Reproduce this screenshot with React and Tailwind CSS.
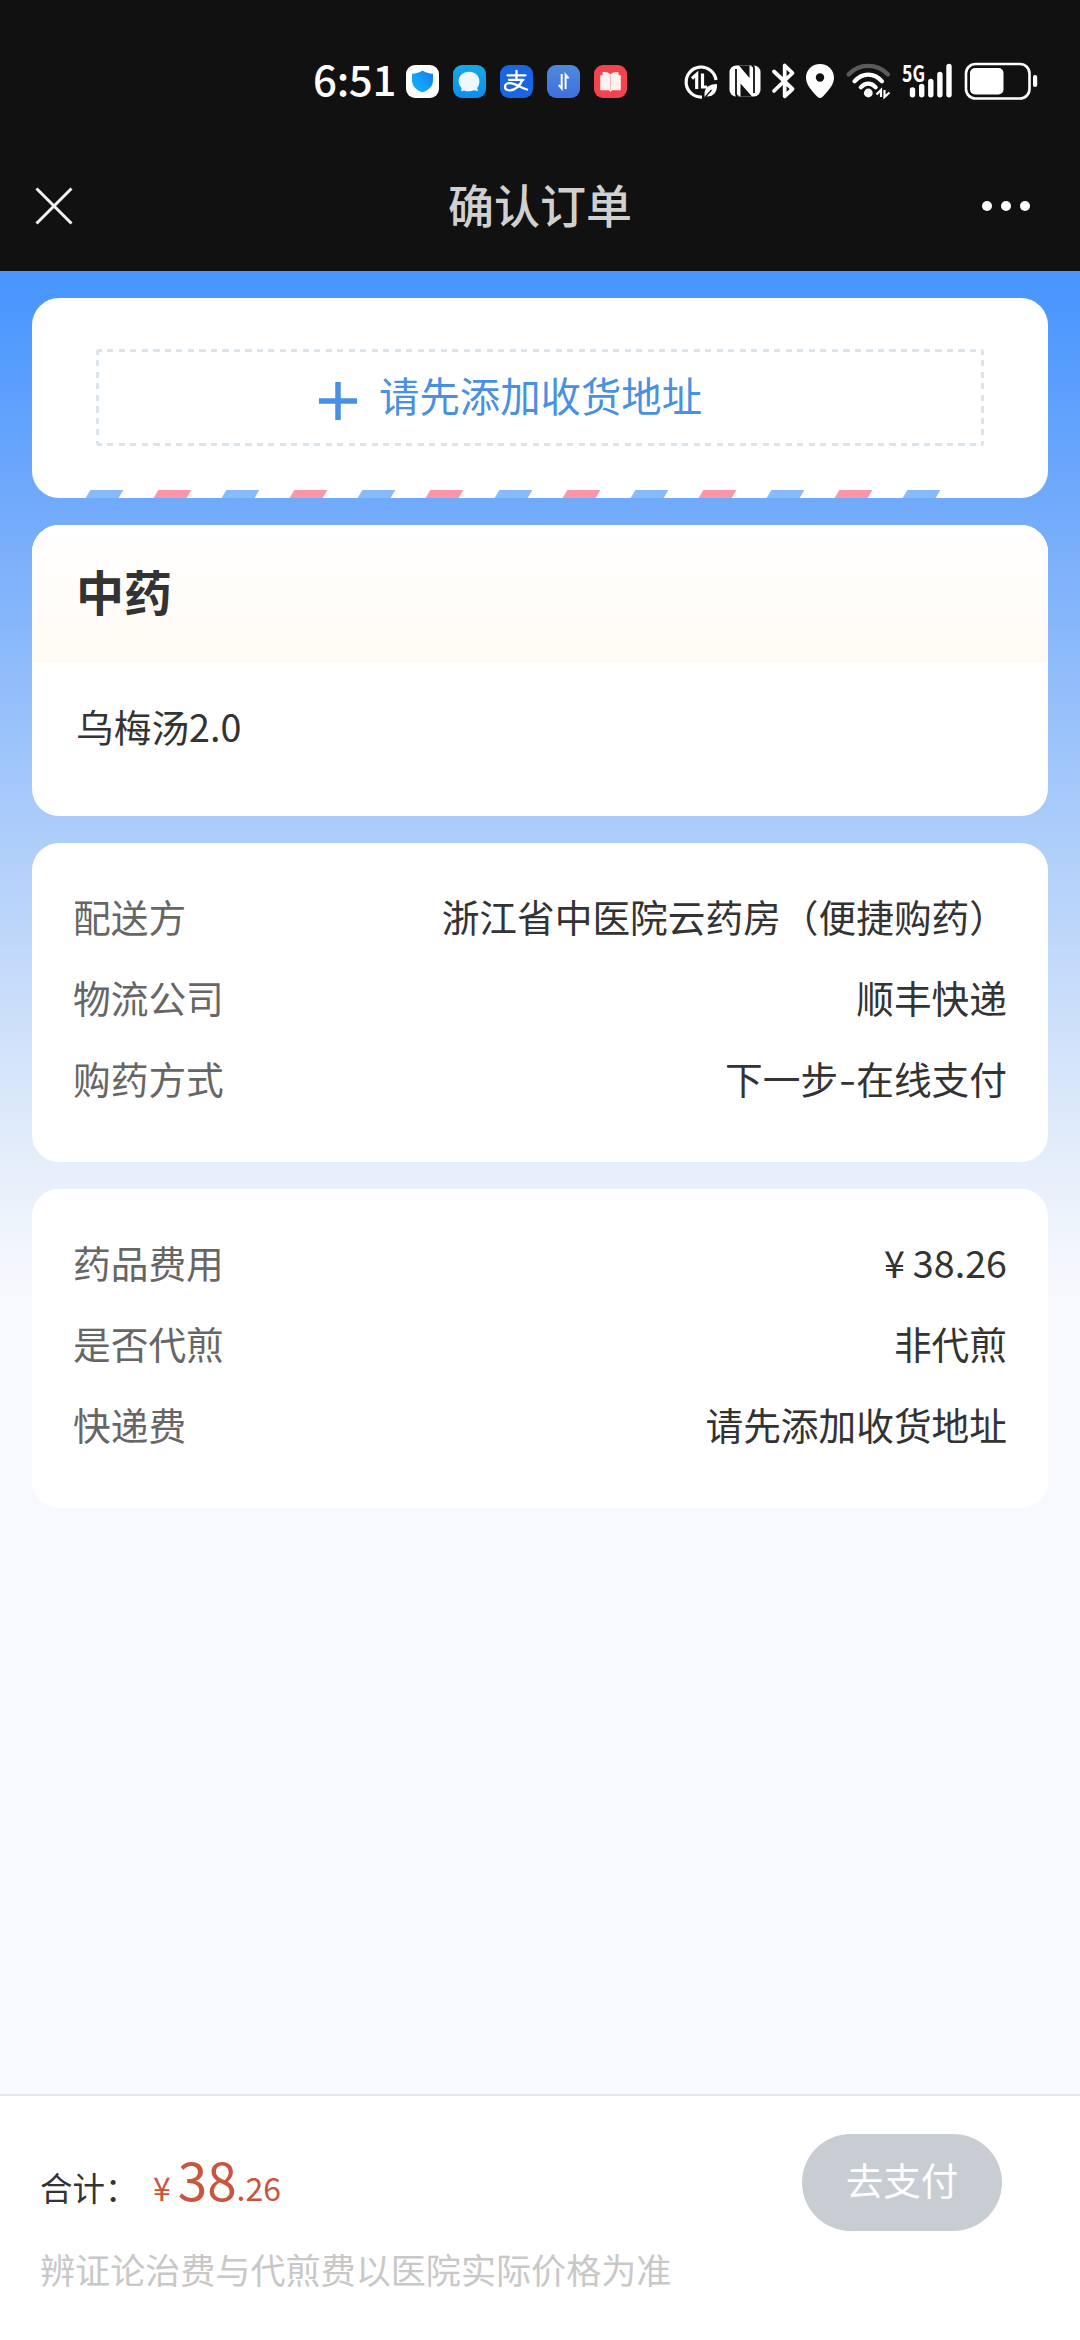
import React from 'react';

const deliveryRows = [
  { label: '配送方', value: '浙江省中医院云药房（便捷购药）' },
  { label: '物流公司', value: '顺丰快递' },
  { label: '购药方式', value: ['下一步', '在线支付'] },
];

const feeRows = [
  { label: '药品费用', price: '38.26' },
  { label: '是否代煎', value: '非代煎' },
  { label: '快递费', value: '请先添加收货地址' },
];

const AppBadge = ({ className, children }) => (
  <div className={`w-[33px] h-[33px] rounded-[9px] overflow-hidden ${className}`}>
    <svg viewBox="0 0 33 33" className="w-full h-full">
      {children}
    </svg>
  </div>
);

const NotificationIcons = () => (
  <div className="flex gap-[14px]">
    <AppBadge className="bg-white">
      <defs>
        <linearGradient id="shield" x1="1" y1="0" x2="0" y2="1">
          <stop offset="0" stopColor="#1577f0" />
          <stop offset="0.5" stopColor="#159df5" />
          <stop offset="1" stopColor="#12b4fa" />
        </linearGradient>
      </defs>
      <path d="M16.500 5.500c3 2.200 6.500 3 10.500 3.300v6.700c0 5.500-4.500 10-10.500 11.800-6-1.800-10.500-6.300-10.500-11.800V8.800c4-.3 7.500-1.100 10.500-3.300z" fill="url(#shield)" />
    </AppBadge>
    <AppBadge className="bg-linear-to-b from-[#18a9e6] to-[#0d8df0]">
      <path d="M16 6.800c6 0 10.400 4 10.400 9.500 0 3-.9 5.200-2.400 6.900l1.300 2.900-4.500-.8a12 12 0 0 1-4.800 1c-2 0-3.300-.3-4.700-.9l-3.300.9.700-3.300C6.700 21.300 5.600 19.100 5.600 16.300c0-5.500 4.400-9.500 10.400-9.500z" fill="#eef9ff" />
    </AppBadge>
    <AppBadge className="bg-[#1a66e0]">
      <g fill="none" stroke="#fff" strokeWidth="2.300" strokeLinecap="round">
        <path d="M7.500 10.300h18M16.500 6v8.500M9 14.800h14.500" />
        <path d="M22.300 15c-1.800 5-7 10.300-12.600 10.300-3 0-4.700-1.600-4.700-3.500 0-2.100 2-3.600 5-3.600 5.500 0 10.500 4.800 17 6.300" />
      </g>
    </AppBadge>
    <AppBadge className="bg-linear-to-b from-[#4f8adb] to-[#3f6fe0]">
      <g fill="none" stroke="#fff" strokeWidth="2">
        <path d="M14.700 9v14.500l-3-3.600" />
        <path d="M18.600 24V9.800l3 3.600" />
      </g>
    </AppBadge>
    <AppBadge className="bg-[#f2434f]">
      <path d="M16.500 9.500c-2-2.300-5-2.800-8-2.300v3H6.200v15h8.500l1.800 1.600 1.800-1.600h8.500v-15h-2.300v-3c-3-.5-6 0-8 2.300z" fill="#fff1ee" />
      <path d="M16.500 10v15" stroke="#f9b9b9" strokeWidth="1" />
    </AppBadge>
  </div>
);

// data saver, nfc, bluetooth, location, wifi, signal, battery
const SystemIcons = () => (
  <svg viewBox="0 -12 360 64" className="w-[360px] h-[64px]" fill="none" stroke="#fff">
    <g strokeWidth="3.200">
      <path d="M20 36A15 15 0 1 1 34 19" />
      <path d="M10 17.500l4.700-4.200V28M20.500 12.500V26h4.500" strokeWidth="3.200" />
      <path d="M22.500 33.500c0-7 4-10 12.500-10.500.5 8-3.500 13-11 12.500l-1.500 2" fill="#fff" stroke="none" />
      <path d="M22 37.500l7.500-8.500" stroke="#111" strokeWidth="1.300" />
    </g>
    <rect x="47.500" y="4.500" width="31" height="31" rx="6.500" fill="#fff" stroke="none" />
    <path d="M57 4.500h10.500v12.500zM58.500 35.500V22.500l11.500 13z" fill="#111" stroke="none" />
    <path d="M54 8v24.500c0 2 .8 3 2.500 3M72 32V7.500c0-2-.8-3-2.500-3" stroke="#111" strokeWidth="1.800" />
    <path d="M92 10.500L110.500 28l-7.800 7.300V4.500l7.800 7.500L92 30" strokeWidth="3.800" strokeLinejoin="round" strokeLinecap="round" />
    <path d="M138 3c8 0 14 6 14 13.700 0 6.800-5 12-11.600 19.300q-2.400 2.200-4.800 0C129 28.700 124 23.500 124 16.700 124 9 130 3 138 3z" fill="#fff" stroke="none" />
    <circle cx="138" cy="16.500" r="4.200" fill="#111" stroke="none" />
    <g strokeWidth="4.200" strokeLinecap="round">
      <path d="M166.500 13.500c11-11.500 28.500-11.500 39.500 0" stroke="#5b5b5b" />
      <path d="M172.500 20.300c8-9 19.500-9 27.500 0" />
      <path d="M178.800 26.300c4.500-5 10.400-5 14.900 0" />
    </g>
    <circle cx="186.300" cy="32" r="4.400" fill="#fff" stroke="none" />
    <path d="M194.500 33.500l4.500-4.500V36M202.500 29v7l5-4.500" strokeWidth="2.200" />
    <text x="220" y="20.500" fontSize="23" fontWeight="700" fill="#fff" stroke="none" textLength="23" lengthAdjust="spacingAndGlyphs" className="font-['Noto_Sans_CJK_SC',sans-serif]">5G</text>
    <g strokeWidth="5.400" strokeLinecap="round">
      <path d="M230.500 29v4.700M239.700 25.500v8.200M248.800 20.500v13.200M257.900 13.500v20.200M267 5.500v28.200" />
    </g>
    <rect x="284" y="3" width="63.500" height="34.500" rx="9.500" strokeWidth="2.600" />
    <rect x="288" y="7" width="33.500" height="26.500" rx="5" fill="#fff" stroke="none" />
    <rect x="351" y="14" width="4.200" height="12" rx="2" fill="#fff" stroke="none" />
  </svg>
);

const StatusBar = () => (
  <div className="flex items-center h-[108px] mt-[27px] -mb-[27px] pl-[313px]">
    <span className="w-[93px] pb-[6px] text-[42px] leading-none font-medium tracking-[-0.3px] text-white">6:51</span>
    <NotificationIcons />
    <div className="ml-[55px]">
      <SystemIcons />
    </div>
  </div>
);

const NavBar = () => (
  <div className="grid grid-cols-3 items-center h-[130px] mt-[33px] px-[35px]">
    <svg viewBox="0 0 38 38" className="w-[38px] h-[38px]" stroke="#f2f2f2" strokeWidth="3">
      <path d="M1.500 1.500l35 35M36.500 1.500l-35 35" />
    </svg>
    <h1 className="pb-[6px] text-center text-[46px] leading-none font-medium text-[#d0d0d0] whitespace-nowrap">确认订单</h1>
    <div className="flex justify-end gap-[9px] pr-[15px]">
      <span className="w-[10px] h-[10px] rounded-full bg-white" />
      <span className="w-[10px] h-[10px] rounded-full bg-white" />
      <span className="w-[10px] h-[10px] rounded-full bg-white" />
    </div>
  </div>
);

const AddressCard = () => (
  <section className="h-[200px] rounded-[27px] bg-white overflow-hidden flex flex-col justify-between pt-[51px]">
    <button className="mx-[64px] h-[97px] flex items-center pl-[223px] gap-[22px] text-[#4a90e2] rounded-[3px] [background:repeating-linear-gradient(90deg,#dae4ec_0_6px,transparent_6px_11.500px)_top/100%_3px_no-repeat,repeating-linear-gradient(90deg,#dae4ec_0_6px,transparent_6px_11.500px)_bottom/100%_3px_no-repeat,repeating-linear-gradient(#dae4ec_0_6px,transparent_6px_11.500px)_left/3px_100%_no-repeat,repeating-linear-gradient(#dae4ec_0_6px,transparent_6px_11.500px)_right/3px_100%_no-repeat]">
      <svg viewBox="0 0 38 38" className="w-[38px] h-[38px] mt-[7px]" stroke="currentColor" strokeWidth="5.500">
        <path d="M19 0v38M0 19h38" />
      </svg>
      <span className="pb-[5px] text-[40.400px] leading-none">请先添加收货地址</span>
    </button>
    <div className="flex gap-[35px] ml-[56px]">
      {Array.from({ length: 13 }, (_, i) => (
        <span
          key={i}
          className={`w-[33.100px] h-[8px] shrink-0 -skew-x-[30deg] ${i % 2 === 0 ? 'bg-[#88bbf9]' : 'bg-[#fa96a8]'}`}
        />
      ))}
    </div>
  </section>
);

const MedicineCard = () => (
  <section className="h-[291px] rounded-[27px] bg-white overflow-hidden">
    <div className="h-[138px] pl-[44px] pt-[41px] bg-linear-to-b from-white to-[#fffbf4]">
      <h2 className="text-[48px] leading-[48px] font-bold text-[#333]">中药</h2>
    </div>
    <p className="pl-[44px] pt-[43px] text-[37.700px] leading-[40px] text-[#333]">乌梅汤2.0</p>
  </section>
);

const RowValue = ({ row }) => {
  if (row.price) {
    return (
      <span className="text-[#333]">
        <span className="mr-[8px]">¥</span>
        {row.price}
      </span>
    );
  }

  // two-part values are joined by a slightly spaced dash
  if (Array.isArray(row.value)) {
    return (
      <span className="text-[#333]">
        {row.value[0]}
        <span className="inline-block mx-[2.500px] scale-x-[1.300]">-</span>
        {row.value[1]}
      </span>
    );
  }

  return <span className="text-[#333]">{row.value}</span>;
};

const InfoCard = ({ rows }) => (
  <section className="h-[319px] rounded-[27px] bg-white pt-[32px] pl-[41px] pr-[41px]">
    {rows.map((row) => (
      <div key={row.label} className="flex items-center justify-between h-[81px] text-[37.700px] leading-none">
        <span className="text-[#666]">{row.label}</span>
        <RowValue row={row} />
      </div>
    ))}
  </section>
);

const PayBar = () => (
  <footer className="h-[246px] shrink-0 bg-white border-t-2 border-[#e4e7eb] pl-[40px] pr-[78px] pt-[38px]">
    <div className="flex items-center justify-between">
      <div className="flex items-baseline pb-[9px] leading-none text-[#c9553c]">
        <span className="w-[113px] text-[32.500px] text-[#333]">合计：</span>
        <span className="text-[32px] mr-[7px]">¥</span>
        <span className="text-[53px]">38</span>
        <span className="text-[32px]">.26</span>
      </div>
      <button className="w-[200px] h-[97px] rounded-full bg-[#c8cdd4] pb-[7px] text-[37.600px] leading-none text-white">去支付</button>
    </div>
    <p className="mt-[20px] text-[35.100px] leading-[36px] text-[#c8c8c8]">辨证论治费与代煎费以医院实际价格为准</p>
  </footer>
);

const App = () => {
  return (
    <div className="w-[1080px] h-[2340px] flex flex-col overflow-hidden bg-[#f8f9fe] font-['Noto_Sans_CJK_SC',sans-serif]">
      <header className="h-[271px] shrink-0 bg-[#111]">
        <StatusBar />
        <NavBar />
      </header>
      <main className="flex-1 flex flex-col gap-[27px] px-[32px] pt-[27px] bg-[linear-gradient(180deg,#4896ff_0px,#4d98ff_40px,#6fa9fb_220px,#a9cbfa_540px,#e3edfa_880px,#f8f9fe_1020px)]">
        <AddressCard />
        <MedicineCard />
        <InfoCard rows={deliveryRows} />
        <InfoCard rows={feeRows} />
      </main>
      <PayBar />
    </div>
  );
};

export default App;
